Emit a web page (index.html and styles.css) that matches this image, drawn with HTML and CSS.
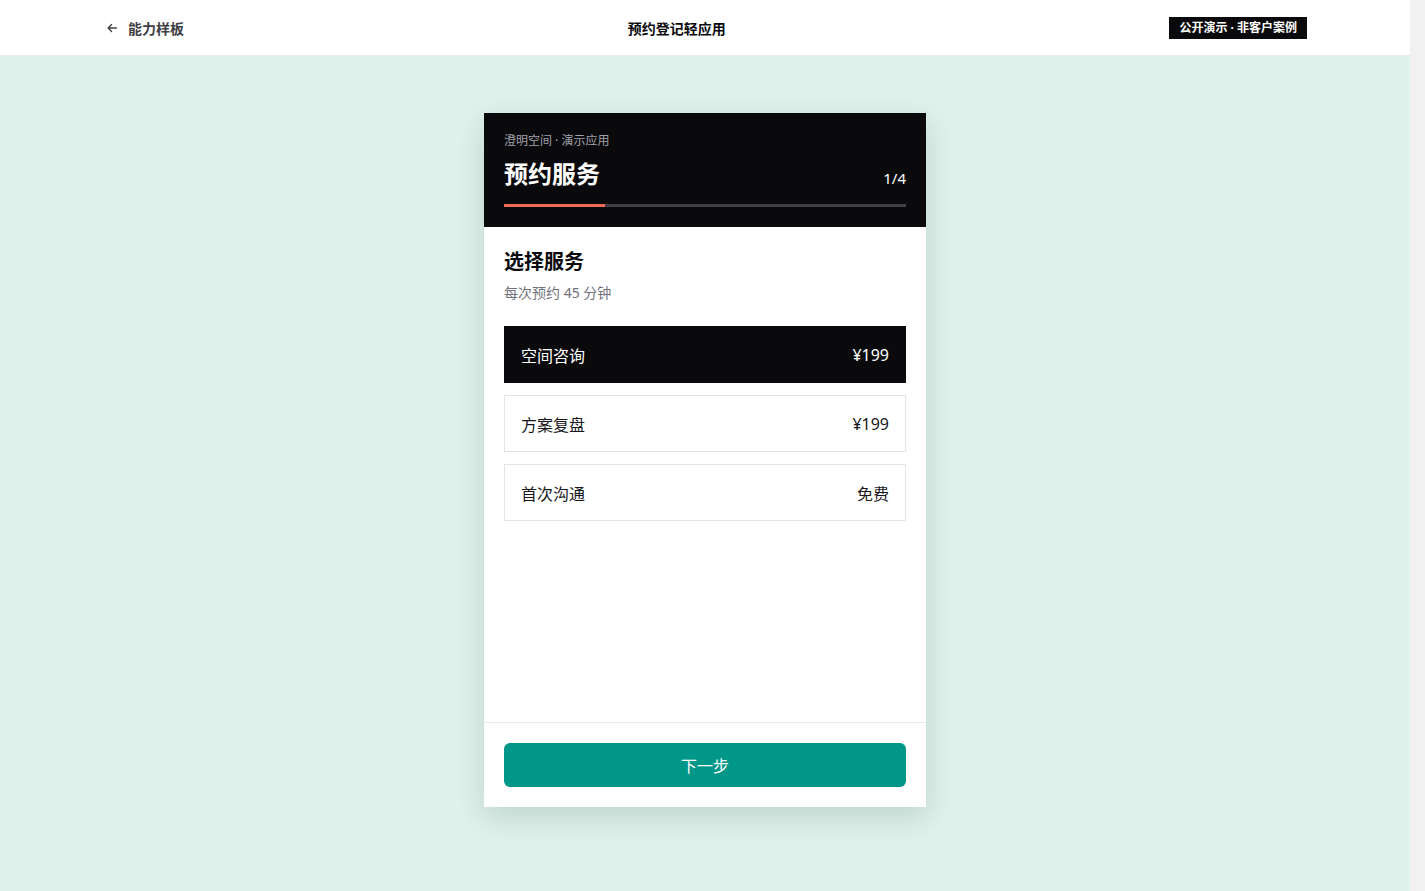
FILE: index.html
```html
<!DOCTYPE html>
<html lang="zh-CN">
<head>
    <meta charset="UTF-8">
    <meta name="viewport" content="width=device-width, initial-scale=1.0">
    <title>预约登记轻应用</title>
    <link rel="stylesheet" href="styles.css">
</head>
<body>
    <!-- Top bar -->
    <header class="topbar">
        <div class="topbar-inner">
            <a class="back-link" href="#">
                <svg viewBox="0 0 16 16" fill="none" stroke="currentColor" stroke-width="1.5" stroke-linecap="round" stroke-linejoin="round">
                    <path d="M13 8H3.5M7.5 4L3.5 8l4 4" />
                </svg>
                <span>能力样板</span>
            </a>
            <div class="topbar-title">预约登记轻应用</div>
            <div class="badge">公开演示 · 非客户案例</div>
        </div>
    </header>

    <main class="stage">
        <div class="phone">
            <!-- Booking header -->
            <div class="phone-head">
                <p class="brand">澄明空间 · 演示应用</p>
                <div class="head-row">
                    <h1 class="head-title">预约服务</h1>
                    <span class="step">1/4</span>
                </div>
                <div class="progress">
                    <div class="progress-fill" style="width: 25%"></div>
                </div>
            </div>

            <!-- Step content -->
            <div class="phone-body">
                <h2 class="section-title">选择服务</h2>
                <p class="section-sub">每次预约 45 分钟</p>

                <ul class="options">
                    <li class="option selected">
                        <span>空间咨询</span>
                        <span class="price">¥199</span>
                    </li>
                    <li class="option">
                        <span>方案复盘</span>
                        <span class="price">¥199</span>
                    </li>
                    <li class="option">
                        <span>首次沟通</span>
                        <span class="price">免费</span>
                    </li>
                </ul>
            </div>

            <!-- Footer action -->
            <div class="phone-foot">
                <button class="next-button">下一步</button>
            </div>
        </div>
    </main>
</body>
</html>
```

FILE: styles.css
```css
* {
    margin: 0;
    padding: 0;
    box-sizing: border-box;
}

html {
    background: #f1f1f1;
}

body {
    width: calc(100% - 15px);
    font-family: "Noto Sans", "Noto Sans CJK SC", sans-serif;
    background: #dff2eb;
    color: #0a0a0c;
}

/* Top bar */
.topbar {
    background: white;
    border-bottom: 1px solid #e7ece9;
    height: 56px;
}

.topbar-inner {
    max-width: 1200px;
    height: 100%;
    margin: 0 auto;
    display: flex;
    align-items: center;
    justify-content: space-between;
}

.back-link {
    display: flex;
    align-items: center;
    gap: 9px;
    font-size: 14px;
    font-weight: 700;
    color: #3f3f46;
    text-decoration: none;
}

.back-link svg {
    width: 14px;
    height: 14px;
}

.topbar-title {
    font-size: 14px;
    font-weight: 700;
    color: #0a0a0c;
}

.badge {
    background: #0a0a0c;
    color: white;
    font-size: 12px;
    font-weight: 700;
    line-height: 22px;
    padding: 0 10px;
    margin-right: -2px;
}

/* Stage */
.stage {
    min-height: 100vh;
    padding: 57px 16px;
    display: flex;
    justify-content: center;
    align-items: flex-start;
}

.phone {
    width: 442px;
    height: 694px;
    background: white;
    display: flex;
    flex-direction: column;
    box-shadow: 0 10px 28px rgba(20, 60, 45, 0.16);
}

/* Booking header */
.phone-head {
    background: #0a0a0c;
    padding: 20px 20px 20px;
    color: white;
}

.brand {
    font-size: 12px;
    color: #a1a1aa;
    line-height: 16px;
}

.head-row {
    display: flex;
    align-items: flex-end;
    justify-content: space-between;
    margin-top: 9px;
}

.head-title {
    font-size: 24px;
    font-weight: 700;
    line-height: 32px;
}

.step {
    font-size: 15px;
    line-height: 22px;
    margin-bottom: 1px;
}

.progress {
    margin-top: 14px;
    height: 3px;
    background: #3f3f46;
}

.progress-fill {
    height: 100%;
    background: #f26b51;
}

/* Step content */
.phone-body {
    flex: 1;
    padding: 21px 20px;
}

.section-title {
    font-size: 20px;
    font-weight: 700;
    line-height: 28px;
}

.section-sub {
    font-size: 14px;
    color: #71717a;
    line-height: 20px;
    margin-top: 7px;
}

.options {
    list-style: none;
    margin-top: 23px;
    display: flex;
    flex-direction: column;
    gap: 12px;
}

.option {
    height: 57px;
    padding: 0 16px;
    border: 1px solid #e4e4e7;
    display: flex;
    align-items: center;
    justify-content: space-between;
    font-size: 16px;
    color: #18181b;
}

.option.selected {
    background: #0a0a0c;
    border-color: #0a0a0c;
    color: white;
}

/* Footer action */
.phone-foot {
    border-top: 1px solid #e6ebe9;
    padding: 20px 20px;
}

.next-button {
    width: 100%;
    height: 44px;
    border: none;
    border-radius: 6px;
    background: #009688;
    color: white;
    font-family: inherit;
    font-size: 16px;
    cursor: pointer;
}
```
